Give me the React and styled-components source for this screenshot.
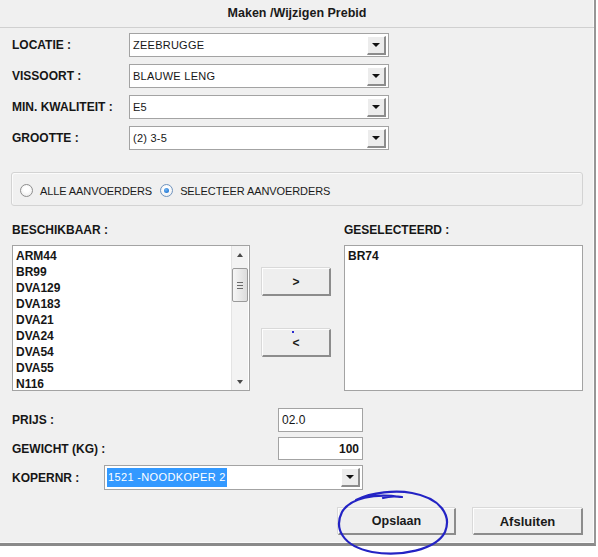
import React from "react";
import styled, { createGlobalStyle, css } from "styled-components";

const Global = createGlobalStyle`
  html, body { margin: 0; padding: 0; background: #ffffff; }
  body { font-family: "Liberation Sans", Arial, sans-serif; color: #141414; }
  * { box-sizing: border-box; }
`;

const Page = styled.div`
  width: 598px;
  height: 557px;
  background: #ffffff;
`;

const Window = styled.div`
  position: relative;
  width: 596px;
  height: 546px;
  background: #f0f0f0;
  border-right: 2px solid #969696;
  border-bottom: 3px solid #8a8a8a;
  box-shadow: inset -1px -1px 0 #fafafa;
  display: flex;
  flex-direction: column;
`;

const TitleBar = styled.div`
  height: 28px;
  flex: none;
  display: flex;
  align-items: center;
  justify-content: center;
  font-weight: bold;
  font-size: 12.5px;
  color: #1a1a1a;
  border-bottom: 1px solid #d0d0d0;
  padding-bottom: 1px;
`;

const FieldGrid = styled.div`
  display: grid;
  grid-template-columns: 117px 260px;
  grid-auto-rows: 24px;
  row-gap: 7px;
  align-items: center;
  padding-left: 12px;
  margin-top: 5px;
`;

const Label = styled.div`
  font-weight: bold;
  font-size: 12px;
  line-height: 14px;
  white-space: nowrap;
  color: #161616;
`;

const Combo = styled.div`
  height: ${(p) => p.$h || 24}px;
  background: #ffffff;
  border: 1px solid #a3a3a3;
  display: flex;
  align-items: center;
  justify-content: space-between;
  padding-left: ${(p) => (p.$pad != null ? p.$pad : 3)}px;
  ${(p) => p.$span && css`grid-column: ${p.$span};`}
`;

const ComboText = styled.span`
  font-size: 11px;
  letter-spacing: 0.25px;
  color: #161616;
  white-space: nowrap;
`;

const SelectedText = styled.span`
  font-size: 11px;
  letter-spacing: 0.35px;
  line-height: 19px;
  color: #ffffff;
  background: #3399ff;
  padding: 0 1px;
  white-space: nowrap;
`;

const DropButton = styled.div`
  width: 19px;
  height: 19px;
  margin-right: 2px;
  background: #ececec;
  border-top: 1px solid #ffffff;
  border-left: 1px solid #ffffff;
  border-right: 2px solid #8c8c8c;
  border-bottom: 2px solid #8c8c8c;
  display: flex;
  align-items: center;
  justify-content: center;
  &::after {
    content: "";
    width: 0;
    height: 0;
    border-left: 4px solid transparent;
    border-right: 4px solid transparent;
    border-top: 4px solid #111;
  }
`;

const GroupBox = styled.div`
  margin: 22px 0 0 11px;
  width: 572px;
  height: 34px;
  border: 1px solid #d3d3d3;
  border-radius: 3px;
  box-shadow: inset 1px 1px 0 #fbfbfb;
  display: flex;
  align-items: center;
  gap: 8px;
  padding: 3px 0 0 8px;
`;

const RadioItem = styled.label`
  display: flex;
  align-items: center;
  gap: 7px;
  font-size: 11px;
  letter-spacing: -0.1px;
  color: #1a1a1a;
  white-space: nowrap;
`;

const RadioCircle = styled.span`
  width: 13px;
  height: 13px;
  border-radius: 50%;
  border: 1px solid ${(p) => (p.$checked ? "#6f94bf" : "#8e8e8e")};
  background: radial-gradient(circle at 50% 40%, #ffffff 30%, #e6e6e6 100%);
  display: flex;
  align-items: center;
  justify-content: center;
  &::after {
    content: "";
    display: ${(p) => (p.$checked ? "block" : "none")};
    width: 5px;
    height: 5px;
    border-radius: 50%;
    background: radial-gradient(circle at 40% 35%, #6fb6f5 0%, #1f72cf 80%);
  }
`;

const ListsRow = styled.div`
  display: flex;
  padding-left: 12px;
  margin-top: 17px;
`;

const ListCol = styled.div`
  width: ${(p) => p.$w}px;
  margin-left: ${(p) => p.$ml || 0}px;
  display: flex;
  flex-direction: column;
  gap: 8px;
`;

const ListBox = styled.div`
  height: 146px;
  background: #ffffff;
  border: 1px solid #a3a3a3;
  display: flex;
  overflow: hidden;
`;

const ListItems = styled.div`
  flex: 1;
  padding: 2px 3px 0;
  overflow: hidden;
`;

const ListItem = styled.div`
  font-weight: bold;
  font-size: 12px;
  line-height: 16px;
  color: #161616;
`;

const ScrollBar = styled.div`
  width: 17px;
  margin-right: 1px;
  background: #f3f3f3;
  border-left: 1px solid #e4e4e4;
  display: flex;
  flex-direction: column;
`;

const ScrollArrow = styled.div`
  height: 17px;
  flex: none;
  display: flex;
  align-items: center;
  justify-content: center;
  &::after {
    content: "";
    border-left: 3.5px solid transparent;
    border-right: 3.5px solid transparent;
    ${(p) =>
      p.$down
        ? css`border-top: 4px solid #4a4a4a;`
        : css`border-bottom: 4px solid #4a4a4a;`}
  }
`;

const Track = styled.div`
  flex: 1;
  padding: 5px 0 0 0;
`;

const Thumb = styled.div`
  height: 34px;
  border: 1px solid #9a9a9a;
  border-radius: 2px;
  background: linear-gradient(to right, #f6f6f6, #dcdcdc);
  display: flex;
  flex-direction: column;
  align-items: center;
  justify-content: center;
  gap: 2px;
`;

const Grip = styled.span`
  width: 6px;
  height: 1px;
  background: #6a6a6a;
`;

const ButtonCol = styled.div`
  width: 69px;
  margin-left: 12px;
  padding-top: 45px;
  display: flex;
  flex-direction: column;
  gap: 33px;
`;

const Bevel = styled.button`
  position: relative;
  width: ${(p) => p.$w}px;
  height: ${(p) => p.$h}px;
  padding: 0;
  background: #eeeeee;
  border-top: 1px solid #fdfdfd;
  border-left: 1px solid #fdfdfd;
  border-right: 2px solid #8c8c8c;
  border-bottom: 2px solid #8c8c8c;
  box-shadow: -1px -1px 0 #d9d9d9;
  font-family: "Liberation Sans", Arial, sans-serif;
  font-weight: bold;
  font-size: ${(p) => p.$fs || 12}px;
  color: #1a1a1a;
  ${(p) =>
    p.$dot &&
    css`
      &::before {
        content: "";
        position: absolute;
        top: 1px;
        left: 29px;
        width: 2px;
        height: 2px;
        background: #2a2ad0;
      }
    `}
`;

const BottomGrid = styled.div`
  display: grid;
  grid-template-columns: 92px 174px 85px;
  grid-template-rows: 24px 23px 25px;
  row-gap: 5px;
  align-items: center;
  padding-left: 12px;
  margin-top: 17px;
`;

const SpanLabel = styled(Label)`
  grid-column: ${(p) => p.$span || "auto"};
`;

const TextInput = styled.div`
  height: 100%;
  background: #ffffff;
  border: 1px solid #a3a3a3;
  display: flex;
  align-items: center;
  justify-content: ${(p) => (p.$right ? "flex-end" : "flex-start")};
  padding: 0 3px;
  font-size: 12px;
  font-weight: ${(p) => (p.$bold ? "bold" : "normal")};
  color: #161616;
`;

const ButtonBar = styled.div`
  display: flex;
  justify-content: flex-end;
  gap: 17px;
  padding-right: 11px;
  margin-top: 18px;
`;

const Annotation = styled.svg`
  position: absolute;
  left: 0;
  top: 0;
  overflow: visible;
  pointer-events: none;
`;

const combos = [
  ["LOCATIE :", "ZEEBRUGGE"],
  ["VISSOORT :", "BLAUWE LENG"],
  ["MIN. KWALITEIT :", "E5"],
  ["GROOTTE :", "(2) 3-5"],
];

const available = ["ARM44", "BR99", "DVA129", "DVA183", "DVA21", "DVA24", "DVA54", "DVA55", "N116"];

export default function App() {
  return (
    <Page>
      <Global />
      <Window>
        <TitleBar>Maken /Wijzigen Prebid</TitleBar>

        <FieldGrid>
          {combos.map(([label, value]) => (
            <React.Fragment key={label}>
              <Label>{label}</Label>
              <Combo>
                <ComboText>{value}</ComboText>
                <DropButton />
              </Combo>
            </React.Fragment>
          ))}
        </FieldGrid>

        <GroupBox>
          <RadioItem>
            <RadioCircle />
            ALLE AANVOERDERS
          </RadioItem>
          <RadioItem>
            <RadioCircle $checked />
            SELECTEER AANVOERDERS
          </RadioItem>
        </GroupBox>

        <ListsRow>
          <ListCol $w={238}>
            <Label>BESCHIKBAAR :</Label>
            <ListBox>
              <ListItems>
                {available.map((a) => (
                  <ListItem key={a}>{a}</ListItem>
                ))}
              </ListItems>
              <ScrollBar>
                <ScrollArrow />
                <Track>
                  <Thumb>
                    <Grip />
                    <Grip />
                    <Grip />
                  </Thumb>
                </Track>
                <ScrollArrow $down />
              </ScrollBar>
            </ListBox>
          </ListCol>

          <ButtonCol>
            <Bevel $w={69} $h={28}>&gt;</Bevel>
            <Bevel $w={69} $h={28} $dot>&lt;</Bevel>
          </ButtonCol>

          <ListCol $w={239} $ml={13}>
            <Label>GESELECTEERD :</Label>
            <ListBox>
              <ListItems>
                <ListItem>BR74</ListItem>
              </ListItems>
            </ListBox>
          </ListCol>
        </ListsRow>

        <BottomGrid>
          <SpanLabel $span="1 / 3">PRIJS :</SpanLabel>
          <TextInput>02.0</TextInput>
          <SpanLabel $span="1 / 3">GEWICHT (KG) :</SpanLabel>
          <TextInput $right $bold>100</TextInput>
          <Label>KOPERNR :</Label>
          <Combo $h={25} $span="2 / 4" $pad={2}>
            <SelectedText>1521 -NOODKOPER 2</SelectedText>
            <DropButton />
          </Combo>
        </BottomGrid>

        <ButtonBar>
          <Bevel $w={118} $h={27} $fs={12.5}>Opslaan</Bevel>
          <Bevel $w={110} $h={27} $fs={13}>Afsluiten</Bevel>
        </ButtonBar>

        <Annotation width="596" height="546" viewBox="0 0 596 546">
          <path
            d="M 383 498 C 389 496, 396 496, 402 497 M 400 497 C 375 493, 350 498, 342 512 C 334 528, 342 546, 372 552 C 400 557, 436 550, 445 532 C 452 515, 440 498, 412 493 C 396 490, 372 492, 356 500"
            fill="none"
            stroke="#2323c4"
            strokeWidth="2.2"
            strokeLinecap="round"
          />
        </Annotation>
      </Window>
    </Page>
  );
}
